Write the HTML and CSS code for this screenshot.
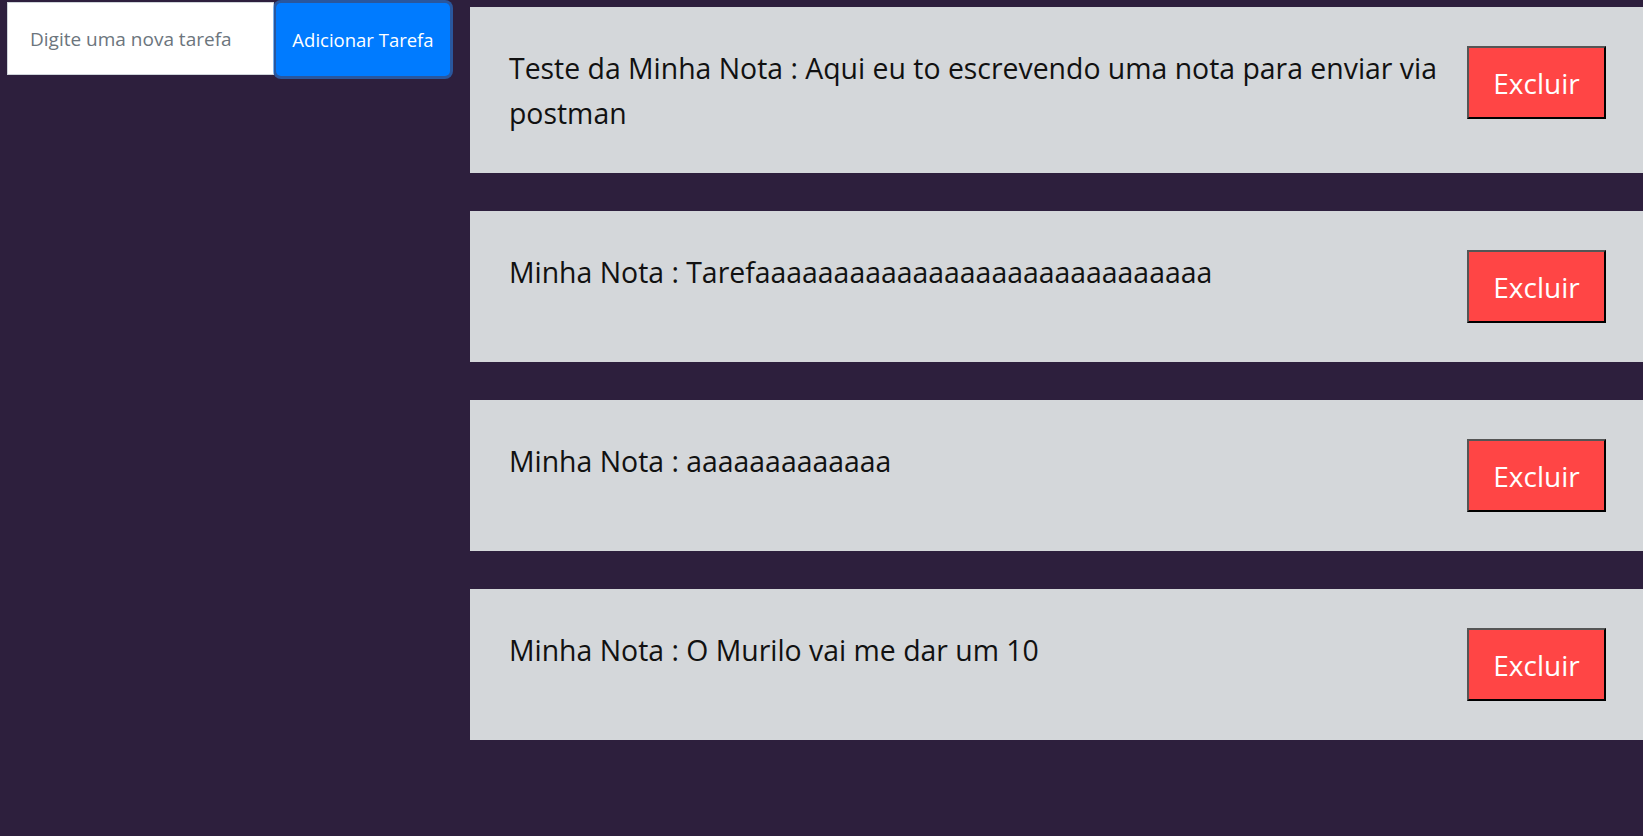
FILE: index.html
```html
<!DOCTYPE html>
<html lang="pt-BR">
<head>
<meta charset="utf-8">
<title>Notas</title>
<link rel="stylesheet" href="styles.css">
</head>
<body>
<main class="app">
  <form class="task-form">
    <input class="task-input" type="text" placeholder="Digite uma nova tarefa">
    <button class="btn-add" type="button">Adicionar Tarefa</button>
  </form>
  <ul class="notes">
    <li class="note">
      <p class="note-text">Teste da Minha Nota : Aqui eu to escrevendo uma nota para enviar via postman</p>
      <button class="btn-delete" type="button">Excluir</button>
    </li>
    <li class="note">
      <p class="note-text">Minha Nota : Tarefaaaaaaaaaaaaaaaaaaaaaaaaaaaaa</p>
      <button class="btn-delete" type="button">Excluir</button>
    </li>
    <li class="note">
      <p class="note-text">Minha Nota : aaaaaaaaaaaaa</p>
      <button class="btn-delete" type="button">Excluir</button>
    </li>
    <li class="note">
      <p class="note-text">Minha Nota : O Murilo vai me dar um 10</p>
      <button class="btn-delete" type="button">Excluir</button>
    </li>
  </ul>
</main>
</body>
</html>
```
FILE: styles.css
```css
* {
  box-sizing: border-box;
}

html, body {
  margin: 0;
  padding: 0;
}

body {
  background: #2d1f3d;
  min-height: 100vh;
  font-family: "Open Sans", "Noto Sans", sans-serif;
  color: #111;
  overflow: hidden;
}

.app {
  display: flex;
  align-items: flex-start;
}

.task-form {
  flex: none;
  width: 470px;
  display: flex;
  align-items: flex-start;
  padding: 2px 0 0 7px;
}

.task-input {
  width: 267px;
  height: 73px;
  border: 1px solid #ced4da;
  border-radius: 0;
  background: #fff;
  padding: 0 22px;
  font-family: inherit;
  font-size: 19px;
  color: #495057;
  outline: none;
}

.task-input::placeholder {
  color: #6c757d;
}

.btn-add {
  width: 174px;
  height: 73px;
  margin: 1px 0 0 2px;
  background: #007bff;
  color: #fff;
  border: none;
  border-radius: 5px;
  box-shadow: 0 0 0 3px rgba(38, 143, 255, 0.5);
  font-family: inherit;
  font-size: 18.5px;
  padding: 0;
  cursor: pointer;
}

.notes {
  flex: 1;
  list-style: none;
  margin: 0;
  padding: 7px 0 0;
  display: flex;
  flex-direction: column;
  gap: 38px;
}

.note {
  display: flex;
  align-items: flex-start;
  justify-content: space-between;
  gap: 30px;
  background: #d4d7da;
  padding: 37px 37px 37px 39px;
}

.note-text {
  margin: 2px 0 0;
  font-size: 28.4px;
  line-height: 45px;
  color: #111;
}

.btn-delete {
  flex: none;
  width: 139px;
  height: 73px;
  margin: 2px 0;
  background: #ff4545;
  color: #fff;
  font-family: inherit;
  font-size: 28px;
  border: 2px solid;
  border-color: #555 #000 #000 #555;
  padding: 0;
  cursor: pointer;
}
```
